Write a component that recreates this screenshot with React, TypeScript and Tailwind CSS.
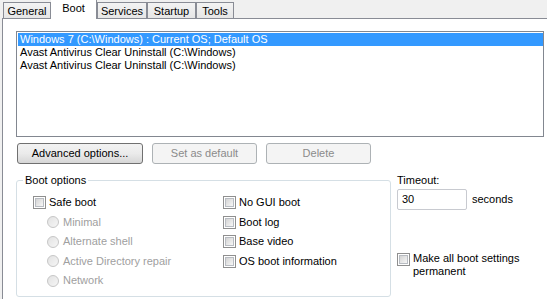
import React from 'react';

const tabs = [
  { label: 'General', w: 'w-[48px]' },
  { label: 'Boot', w: 'w-[46px]', active: true },
  { label: 'Services', w: 'w-[50px]' },
  { label: 'Startup', w: 'w-[49px]' },
  { label: 'Tools', w: 'w-[38px]' },
];

const entries = [
  'Windows 7 (C:\\Windows) : Current OS; Default OS',
  'Avast Antivirus Clear Uninstall (C:\\Windows)',
  'Avast Antivirus Clear Uninstall (C:\\Windows)',
];

const CheckBox = () => (
  <div className="w-[13px] h-[13px] shrink-0 border border-[#8f8f8f] bg-white p-[1px]">
    <div className="w-full h-full border border-[#b8bcc2] bg-linear-to-br from-[#d4d4d4] to-[#f7f7f7]" />
  </div>
);

const Radio = () => (
  <div className="w-[12px] h-[12px] shrink-0 rounded-full border border-[#c6c6c6] bg-linear-to-br from-[#e2e2e2] to-[#f6f6f6]" />
);

const CheckRow = ({ label, h }: { label: string; h: string }) => (
  <div className={`flex items-center gap-[3px] ${h}`}>
    <CheckBox />
    <span>{label}</span>
  </div>
);

const RadioRow = ({ label, h }: { label: string; h: string }) => (
  <div className={`flex items-center gap-[4px] pl-[14px] text-[#a0a0a0] ${h}`}>
    <Radio />
    <span>{label}</span>
  </div>
);

export default function App() {
  return (
    <div className="w-[547px] h-[299px] overflow-hidden flex flex-col bg-[#f0f0f0] text-black font-['Liberation_Sans',Arial,sans-serif] text-[11px] leading-[13px]">
      {/* tab strip */}
      <div className="h-[18px] flex items-end pl-[3px] shrink-0">
        {tabs.map((t) =>
          t.active ? (
            <div
              key={t.label}
              className={`${t.w} h-[19px] -mb-px relative z-10 bg-white border-r border-[#898c95] flex justify-center pt-[2px]`}
            >
              {t.label}
            </div>
          ) : (
            <div
              key={t.label}
              className={`${t.w} h-[16px] border border-b-0 border-[#898c95] bg-linear-to-b from-[#f3f3f3] to-[#e6e6e6] flex justify-center pt-[2px]`}
            >
              {t.label}
            </div>
          )
        )}
      </div>

      {/* tab page */}
      <div className="flex-1 ml-[2px] border-l border-t border-[#898c95] bg-white pl-[13px] pt-[12px]">
        <div className="w-[528px] h-[106px] border border-[#828790] p-[1px] pr-0">
          {entries.map((e, i) => (
            <div
              key={i}
              className={`h-[13px] pl-[2px] whitespace-nowrap ${i === 0 ? 'bg-[#3399ff] text-white' : ''}`}
            >
              {e}
            </div>
          ))}
        </div>

        <div className="flex gap-[9px] mt-[6px] ml-[1px]">
          <button className="w-[126px] h-[21px] rounded-[3px] border border-[#707070] bg-linear-to-b from-[#f2f2f2] via-[#ebebeb] to-[#d6d6d6]">
            Advanced options...
          </button>
          <button className="w-[105px] h-[21px] rounded-[3px] border border-[#adb2b5] bg-[#f4f4f4] text-[#8b8b8b]">
            Set as default
          </button>
          <button className="w-[105px] h-[21px] rounded-[3px] border border-[#adb2b5] bg-[#f4f4f4] text-[#8b8b8b]">
            Delete
          </button>
        </div>

        <div className="flex items-start mt-[10px]">
          <fieldset className="w-[375px] h-[123px] border border-[#d5dfe5] rounded-[3px]">
            <legend className="ml-[6px] px-[2px]">Boot options</legend>
            <div className="flex pt-[6px] pl-[16px]">
              <div className="w-[190px] flex flex-col">
                <CheckRow label="Safe boot" h="h-[19px]" />
                <RadioRow label="Minimal" h="h-[20px]" />
                <RadioRow label="Alternate shell" h="h-[19px]" />
                <RadioRow label="Active Directory repair" h="h-[20px]" />
                <RadioRow label="Network" h="h-[19px]" />
              </div>
              <div className="flex flex-col">
                <CheckRow label="No GUI boot" h="h-[19px]" />
                <CheckRow label="Boot log" h="h-[20px]" />
                <CheckRow label="Base video" h="h-[19px]" />
                <CheckRow label="OS boot information" h="h-[20px]" />
              </div>
            </div>
          </fieldset>

          <div className="ml-[6px] flex flex-col">
            <div>Timeout:</div>
            <div className="flex items-center gap-[5px] mt-[2px]">
              <div className="w-[70px] h-[21px] border border-[#c8cad0] rounded-[2px] pl-[4px] flex items-center">30</div>
              <span>seconds</span>
            </div>
            <div className="flex items-start gap-[3px] mt-[42px]">
              <div className="mt-[1px]">
                <CheckBox />
              </div>
              <span className="w-[120px]">Make all boot settings permanent</span>
            </div>
          </div>
        </div>
      </div>
    </div>
  );
}
